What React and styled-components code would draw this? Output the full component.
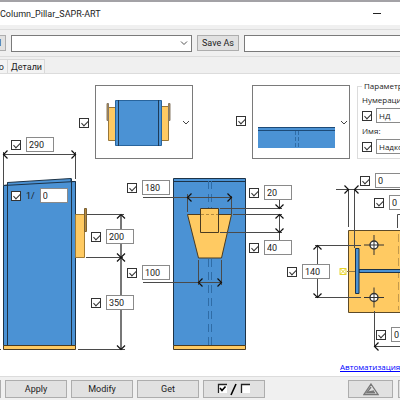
import React from 'react'
import styled, { createGlobalStyle } from 'styled-components'

const GlobalStyle = createGlobalStyle`
    * {
        box-sizing: border-box;
    }

    body {
        margin: 0;
        overflow: hidden;
        color: #1c1c1c;
        font-family: Roboto, 'Liberation Sans', sans-serif;
        font-size: 9px;
        line-height: 12px;
    }

    button, input, select {
        font: inherit;
        color: inherit;
        border-radius: 0;
    }
`

const Window = styled.div`
    display: flex;
    flex-direction: column;
    min-height: 100vh;
    overflow: hidden;
    background-color: #f0f0f0;
    border-top: 2px solid #a3a2a6;
`

const TitleBar = styled.header`
    display: flex;
    align-items: center;
    justify-content: space-between;
    height: 23px;
    padding-right: 17px;
    background-color: #fff;

    h1 {
        margin: 0;
        font-size: 9px;
        font-weight: normal;
    }
`

const MinimizeButton = styled.button`
    display: flex;
    align-items: center;
    justify-content: center;
    width: 12px;
    height: 12px;
    padding: 0;
    border: none;
    background: none;
`

const Toolbar = styled.div`
    display: flex;
    align-items: center;
    gap: 5px;
    height: 28px;
    margin-top: 4px;
    border-top: 1px solid #dcdcdc;
    border-bottom: 1px solid #dcdcdc;
`

const Button = styled.button`
    display: flex;
    flex: none;
    align-items: center;
    justify-content: center;
    width: ${props => props.$width || 62}px;
    height: ${props => props.$height || 18}px;
    padding: 0;
    background-color: #e1e1e1;
    border: 1px solid #adadad;
`

const LoadButton = styled(Button)`
    margin-left: -24px;
`

const Combo = styled.div`
    position: relative;
    flex: none;
    width: 181px;

    select {
        display: block;
        width: 100%;
        height: 17px;
        appearance: none;
        background-color: #fff;
        border: 1px solid #7a7a7a;
    }

    svg {
        position: absolute;
        top: 6px;
        right: 4px;
        pointer-events: none;
    }
`

const NameInput = styled.input`
    flex: 1;
    min-width: 0;
    height: 17px;
    margin-right: -4px;
    border: 1px solid #7a7a7a;
`

const Tabs = styled.nav`
    display: flex;
    align-items: flex-end;
    height: 17px;
    margin-left: -40px;
    border-bottom: 1px solid #dcdcdc;
`

const Tab = styled.button`
    height: 14px;
    width: ${props => props.$width}px;
    padding: 0 3px;
    text-align: right;
    background-color: #f3f3f3;
    border: 1px solid #d9d9d9;
    border-bottom: none;
    border-left: none;
`

/* free canvas: the scheme lies below, the parameters are pinned over it */
const Canvas = styled.main`
    position: relative;
    flex: 1;
    min-height: 302px;
    overflow: hidden;
    background-color: #fff;
`

const Scheme = styled.svg`
    display: block;
    width: 100%;
    height: 302px;
`

const CANVAS_TOP = 74

const Pin = styled.div`
    position: absolute;
    left: ${props => props.$x}px;
    top: ${props => props.$y - CANVAS_TOP}px;
    display: flex;
    align-items: center;
    gap: 5px;
`

const CheckBox = styled.input.attrs({ type: 'checkbox' })`
    position: relative;
    flex: none;
    appearance: none;
    width: 10px;
    height: 10px;
    margin: 0;
    background-color: #fff;
    border: 1px solid #333;

    &:checked::after {
        content: '';
        position: absolute;
        left: 3px;
        top: 0;
        width: 3px;
        height: 6px;
        border: solid #333;
        border-width: 0 1px 1px 0;
        transform: rotate(45deg);
    }
`

const ValueInput = styled.input`
    width: ${props => props.$width || 28}px;
    height: 15px;
    padding: 0 2px;
    background-color: #fff;
    border: 1px solid #8a8a8a;
`

const PictureButton = styled.button`
    display: flex;
    width: 98px;
    height: 74px;
    padding: 0;
    background-color: #fff;
    border: 1px solid #7a7a7a;
`

const Group = styled.fieldset`
    position: absolute;
    left: 357px;
    top: 6px;
    width: 120px;
    margin: 0;
    padding: 0 4px 4px;
    border: 1px solid #dcdcdc;
    font-family: 'Open Sans', sans-serif;
    font-size: 8px;

    legend {
        padding: 0 2px;
    }

    p {
        margin: 2px 0;
    }
`

const GroupRow = styled.div`
    display: flex;
    align-items: center;
    gap: 4px;
`

const SiteLink = styled.a`
    position: absolute;
    left: 340px;
    top: 287px;
    color: #00f;
    white-space: nowrap;
    font-family: 'Open Sans', sans-serif;
    font-size: 8px;
`

const Footer = styled.footer`
    display: flex;
    align-items: flex-start;
    gap: 4px;
    height: 24px;
    padding-top: 3px;
    margin-left: -61px;
    margin-right: -40px;
    border-top: 1px solid #dcdcdc;
`

const FooterRight = styled.div`
    display: flex;
    gap: 5px;
    margin-left: auto;
`

const Chevron = () => (
    <svg width="8" height="5" fill="none" stroke="#555">
        <path d="M1 .5 4 3.5 7 .5"/>
    </svg>
)

const turns = { right: 0, down: 90, left: 180, up: 270 }

const Arrow = ({ x, y, to }) => (
    <path d="M-4-4 0 0-4 4" strokeWidth="1.2" stroke="#111" transform={`translate(${x} ${y}) rotate(${turns[to]})`}/>
)

const Bolt = ({ y }) => (
    <g stroke="#333">
        <circle cx="374" cy={y} r="4" fill="#fff" strokeWidth="1.4"/>
        <path d={`M364 ${y}h20M374 ${y - 10}v20`}/>
    </g>
)

const SideView = () => (
    <g stroke="#1d3347" fill="#4b92d4">
        <path d="M3.5 185.5 7.5 185V182.5L71 178.5V181.5H75.5V345.5H3.5Z"/>
        <path d="M7.5 182.5V345M71.5 178.5V345M3.5 185.5 75.5 181.5" fill="none"/>
        <path d="M3.5 345.5h72v4h-72z" fill="#ffca62" stroke="#4b3b20"/>
        <path d="M75.5 214.5h9v43h-9z" fill="#ffca62" stroke="#a17a32"/>
        <path d="M84.5 208.5h2v23h-2z" fill="#b88b3c" stroke="#7a6134"/>
    </g>
)

const FrontView = () => (
    <g stroke="#1d3347">
        <path d="M173.5 178.5h72v167h-72z" fill="#4b92d4"/>
        <path d="M173.5 181.5h72"/>
        <path d="M208.5 181v164M211.5 181v164" stroke="#2f6ca6" strokeDasharray="8 5"/>
        <path d="M173.5 345.5h72v4h-72z" fill="#ffca62" stroke="#4b3b20"/>
        <path d="M187.5 214.5h44l-10 43.5h-23z" fill="#ffca62" stroke="#4b3b20"/>
        <path d="M200.5 208.5h18v24h-18z" fill="#ffca62" stroke="#4b3b20"/>
        <path d="M201 214.5h17" stroke="#b38a3d" strokeDasharray="3 2"/>
    </g>
)

const TopView = () => (
    <g>
        <path d="M348.5 230.5H1200V312.5H348.5Z" fill="#ffca62" stroke="#5c4a28"/>
        <path d="M398.5 234v76" stroke="#c39a4c" strokeDasharray="8 4"/>
        <path d="M347 271.5h8" stroke="#8b7443"/>
        <path d="M359 269.5H1200v3H359z" fill="#4b92d4" stroke="#1d3347"/>
        <path d="M355.5 248.5h3.5v45h-3.5z" fill="#4b92d4" stroke="#1d3347"/>
        <path d="M340 268.5h6v6h-6zM340 268.5l6 6M346 268.5l-6 6" stroke="#e8d42c" fill="none"/>
        <Bolt y={245}/>
        <Bolt y={297.5}/>
    </g>
)

const Dimensions = () => (
    <g fill="none" stroke="#4a4a4a">
        <path d="M3.5 152v33M75.5 152v27M3 154.5h72"/>
        <Arrow x={3.5} y={154.5} to="left"/>
        <Arrow x={75.5} y={154.5} to="right"/>

        <path d="M87 214.5h37M86 257.5h37M78 349.5h47M0 349.5h1"/>
        <path d="M121 214v135" stroke="#777" strokeWidth="2"/>
        <Arrow x={121} y={214.5} to="up"/>
        <Arrow x={121} y={257.5} to="down"/>
        <Arrow x={121} y={257.5} to="up"/>
        <Arrow x={121} y={349.5} to="down"/>

        <path d="M143 197.5h88M187.5 194v18M231.5 196v18"/>
        <Arrow x={187.5} y={197.5} to="left"/>
        <Arrow x={231.5} y={197.5} to="right"/>

        <path d="M143 282.5h78M198.5 260v25M221.5 260v25"/>
        <Arrow x={198.5} y={282.5} to="left"/>
        <Arrow x={221.5} y={282.5} to="right"/>

        <path d="M220 208.5h62M233 214.5h49M220 232.5h62M279.5 199v9M279.5 214v27"/>
        <Arrow x={279.5} y={208.5} to="down"/>
        <Arrow x={279.5} y={214.5} to="up"/>
        <Arrow x={279.5} y={232.5} to="down"/>

        <path d="M348.5 189v38M354.5 189v59M336 189.5H1200M397.5 228V214.5H1200"/>
        <Arrow x={348.5} y={189.5} to="right"/>
        <Arrow x={354.5} y={189.5} to="left"/>

        <path d="M315 245.5h46M315 297.5h46M317.5 245v53"/>
        <Arrow x={317.5} y={245.5} to="up"/>
        <Arrow x={317.5} y={297.5} to="down"/>

        <path d="M374.5 311v36M374 346.5H1200"/>
        <Arrow x={374.5} y={346.5} to="left"/>
    </g>
)

const BracketPicture = () => (
    <svg width="96" height="72">
        <g transform="translate(-96 -86)" stroke="#987638" fill="#ffca62">
            <path d="M108.5 107.5h7v33h-7zM161.5 106.5h7v34h-7z"/>
            <path d="M107 103.5h1.5v17H107zM168.5 103.5h1.5v17h-1.5z" fill="#b88b3c" stroke="#877a68"/>
            <path d="M115.5 100.5h46v45h-46z" fill="#4b92d4" stroke="#28649d"/>
            <path d="M118.5 100v46M158.5 100v46" stroke="#1d3b59"/>
            <path d="m183 121 3 3 3-3" fill="none" stroke="#444"/>
        </g>
    </svg>
)

const CapPicture = () => (
    <svg width="96" height="72">
        <g transform="translate(-253 -86)" fill="none" stroke="#1d4a77">
            <path d="M258 127h77v21h-77z" fill="#4b92d4" stroke="none"/>
            <path d="M258 127.5h77M258 130.5h77"/>
            <path d="M295.5 131v16M298.5 131v16" stroke="#2f6ca6" strokeDasharray="4 2"/>
            <path d="m341 121 3 3 3-3" stroke="#444"/>
        </g>
    </svg>
)

const fields = [
    { name: 'Column width', x: 11, y: 137, value: '290' },
    { name: 'Slope', x: 11, y: 188, value: '0', prefix: '1/' },
    { name: 'Bracket height', x: 91, y: 229, value: '200' },
    { name: 'Bracket level', x: 91, y: 295, value: '350' },
    { name: 'Bracket top width', x: 127, y: 180, value: '180' },
    { name: 'Bracket bottom width', x: 127, y: 265, value: '100' },
    { name: 'Plate above', x: 249, y: 185, value: '20' },
    { name: 'Plate below', x: 249, y: 240, value: '40' },
    { name: 'Bolt spacing', x: 287, y: 264, value: '140' },
    { name: 'Edge offset', x: 360, y: 173, value: '0' },
    { name: 'Plate offset', x: 374, y: 195, value: '0' },
    { name: 'Bolt offset', x: 376, y: 327, value: '0' },
]

const Field = ({ name, x, y, value, prefix }) => (
    <Pin $x={x} $y={y}>
        <CheckBox defaultChecked aria-label={`Use ${name}`}/>
        {prefix && <span>{prefix}</span>}
        <ValueInput aria-label={name} defaultValue={value}/>
    </Pin>
)

const App = () => {

    return (
        <Window>
            <GlobalStyle/>
            <TitleBar>
                <h1>Column_Pillar_SAPR-ART</h1>
                <MinimizeButton aria-label="Minimize">
                    <svg width="8" height="2"><path d="M0 .5h8" stroke="#222"/></svg>
                </MinimizeButton>
            </TitleBar>

            <Toolbar>
                <LoadButton $width={30} $height={16}>Load</LoadButton>
                <Combo>
                    <select aria-label="Settings"><option/></select>
                    <Chevron/>
                </Combo>
                <Button $width={42} $height={16}>Save As</Button>
                <NameInput aria-label="Settings name"/>
            </Toolbar>

            <Tabs>
                <Tab $width={48}>Фото</Tab>
                <Tab $width={37}>Детали</Tab>
            </Tabs>

            <Canvas>
                <Scheme>
                    <g transform={`translate(0 ${-CANVAS_TOP})`}>
                        <SideView/>
                        <FrontView/>
                        <TopView/>
                        <Dimensions/>
                    </g>
                </Scheme>

                <Pin $x={79} $y={118}><CheckBox defaultChecked aria-label="Use bracket type"/></Pin>
                <Pin $x={95} $y={85}>
                    <PictureButton aria-label="Bracket type" aria-haspopup="listbox"><BracketPicture/></PictureButton>
                </Pin>
                <Pin $x={236} $y={116}><CheckBox defaultChecked aria-label="Use cap type"/></Pin>
                <Pin $x={252} $y={85}>
                    <PictureButton aria-label="Cap type" aria-haspopup="listbox"><CapPicture/></PictureButton>
                </Pin>

                {fields.map(field => <Field key={field.name} {...field}/>)}

                <Group>
                    <legend>Параметры</legend>
                    <p><label htmlFor="numbering">Нумерация:</label></p>
                    <GroupRow>
                        <CheckBox defaultChecked aria-label="Use numbering"/>
                        <ValueInput id="numbering" $width={90} defaultValue="НД"/>
                    </GroupRow>
                    <p><label htmlFor="part-name">Имя:</label></p>
                    <GroupRow>
                        <CheckBox defaultChecked aria-label="Use name"/>
                        <ValueInput id="part-name" $width={90} defaultValue="Надколонник"/>
                    </GroupRow>
                </Group>

                <SiteLink href="#">Автоматизация</SiteLink>
            </Canvas>

            <Footer>
                <Button>OK</Button>
                <Button>Apply</Button>
                <Button>Modify</Button>
                <Button>Get</Button>
                <Button aria-label="Toggle all">
                    <svg width="34" height="14" fill="none">
                        <path d="M1 2h9v9H1zM24 2h9v9h-9z" fill="#fff"/>
                        <path d="M1.5 11V2.5H10M24.5 11V2.5H33" stroke="#222" strokeWidth="1.3"/>
                        <path d="m3 6 2 2.5L8.5 4.5M19 2l-5 11" stroke="#000" strokeWidth="1.6"/>
                    </svg>
                </Button>
                <FooterRight>
                    <Button $width={45} aria-label="Drawing">
                        <svg width="16" height="13" fill="none" stroke="#777" strokeWidth="1.3">
                            <path d="M8 1 15 11.5H1ZM8 4 4 9.5H12M6 9l5-1"/>
                        </svg>
                    </Button>
                    <Button $width={42}/>
                </FooterRight>
            </Footer>
        </Window>
    )
}

export default App
